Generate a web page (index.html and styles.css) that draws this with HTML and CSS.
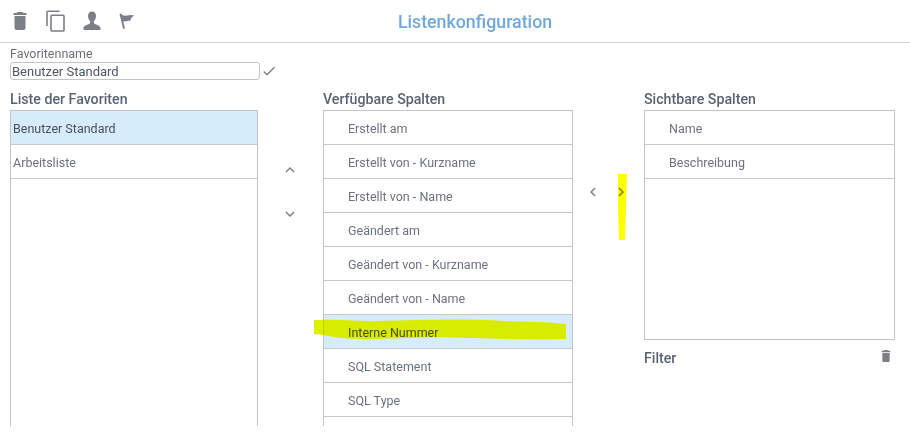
FILE: index.html

```html
<!DOCTYPE html>
<html lang="en">
<head>
  <meta charset="UTF-8">
  <title>Listenkonfiguration</title>
  <link rel="stylesheet" href="styles.css">
</head>
<body>
  <div class="page">
    <header class="topbar">
      <div class="tools">
        <svg class="tool" viewBox="0 0 24 24"><path d="M6.500 19c0 1.100.9 2 2 2h7c1.100 0 2-.9 2-2V7h-11v12zM18.500 4h-3l-1-1h-5l-1 1h-3v2h13V4z"/></svg>
        <svg class="tool" viewBox="0 0 24 24"><path d="M15.500 1.500H4c-1 0-1.800.8-1.800 1.800V17h1.600V3.100h11.700V1.500zm3.500 4H8c-1 0-1.800.8-1.800 1.800V21c0 1 .8 1.800 1.800 1.800h11c1 0 1.800-.8 1.800-1.800V7.300c0-1-.8-1.800-1.800-1.800zm.2 15.700H7.800V7.100h11.400v14.100z"/></svg>
        <svg class="tool" viewBox="0 0 24 24"><path d="M12 2.500c-2.600 0-4 2-4 4.500 0 2.200.9 4 2.100 5.100.5 1.500-.1 2.600-1.500 3.200-2.300 1-5.100 1.700-5.100 4V21h17v-1.700c0-2.300-2.800-3-5.100-4-1.400-.6-2-1.700-1.500-3.200 1.200-1.100 2.100-2.900 2.100-5.100 0-2.500-1.400-4.500-4-4.500z"/></svg>
        <svg class="tool" viewBox="0 0 24 24"><path d="M3.500 5l1.800-.5 1 1.500c2.700 1.400 5 .2 8 0l3.700.3c-1.200 1.400-2.800 2.700-3.600 4.300.2.500.3.900.4 1.300-2.700-.4-5 1.100-7.600.4l1.800 7.200-1.800.5L3.500 5z"/></svg>
      </div>
      <h1 class="title">Listenkonfiguration</h1>
    </header>

    <div class="name-block">
      <label class="name-label" for="favname">Favoritenname</label>
      <div class="name-row">
        <input class="name-input" id="favname" type="text" value="Benutzer Standard">
        <svg class="check" viewBox="0 0 24 24"><path d="M9 16.200L4.800 12l-1.400 1.400L9 19 21 7l-1.400-1.400z"/></svg>
      </div>
    </div>

    <div class="columns">
      <section class="col col-fav">
        <h2 class="col-title">Liste der Favoriten</h2>
        <ul class="list list-fill">
          <li class="plain selected">Benutzer Standard</li>
          <li class="plain">Arbeitsliste</li>
        </ul>
      </section>

      <div class="arrows arrows-updown">
        <svg class="arrow" viewBox="0 0 24 24"><path d="M7.400 15.400L12 10.800l4.600 4.600L18 14l-6-6-6 6z"/></svg>
        <svg class="arrow" viewBox="0 0 24 24"><path d="M7.400 8.600L12 13.200l4.600-4.600L18 10l-6 6-6-6z"/></svg>
      </div>

      <section class="col col-avail">
        <h2 class="col-title">Verfügbare Spalten</h2>
        <ul class="list list-fill">
          <li>Erstellt am</li>
          <li>Erstellt von - Kurzname</li>
          <li>Erstellt von - Name</li>
          <li>Geändert am</li>
          <li>Geändert von - Kurzname</li>
          <li>Geändert von - Name</li>
          <li class="selected">Interne Nummer</li>
          <li>SQL Statement</li>
          <li>SQL Type</li>
          <li></li>
        </ul>
      </section>

      <div class="arrows arrows-leftright">
        <svg class="arrow" viewBox="0 0 24 24"><path d="M15.400 7.400L10.800 12l4.600 4.600L14 18l-6-6 6-6z"/></svg>
        <svg class="arrow" viewBox="0 0 24 24"><path d="M8.600 7.400L13.200 12l-4.600 4.600L10 18l6-6-6-6z"/></svg>
      </div>

      <section class="col col-visible">
        <h2 class="col-title">Sichtbare Spalten</h2>
        <ul class="list list-visible">
          <li>Name</li>
          <li>Beschreibung</li>
        </ul>
        <div class="filter-row">
          <span class="filter-label">Filter</span>
          <svg class="filter-trash" viewBox="0 0 24 24"><path d="M6.500 19c0 1.100.9 2 2 2h7c1.100 0 2-.9 2-2V7h-11v12zM18.500 4h-3l-1-1h-5l-1 1h-3v2h13V4z"/></svg>
        </div>
      </section>
    </div>

    <!-- marker strokes drawn on top of the screenshot -->
    <svg class="marker marker-row" viewBox="0 0 254 22"><path d="M1 1c30-1 40 1 60 1 50-1 90-3 130 0 20 1 40 0 62 3l0 15c-20 1-40 0-60 0-30-1-70-3-100-1-30 1-45 2-65 0-10-1-20-4-27-4z"/></svg>
    <svg class="marker marker-arrow" viewBox="0 0 10 66"><path d="M1 0l9 0-1 30-1 36-6 0-1-30z"/></svg>
  </div>
</body>
</html>
```

FILE: styles.css

```css
* {
  box-sizing: border-box;
}
body {
  margin: 0;
  background: #fff;
  font-family: Roboto, "Liberation Sans", sans-serif;
  color: #6b7280;
}
.page {
  position: relative;
  height: 426px;
  overflow: hidden;
}
.topbar {
  position: relative;
  display: flex;
  align-items: center;
  height: 43px;
  border-bottom: 1px solid #d4d4d4;
}
.tools {
  display: flex;
  gap: 12px;
  padding-left: 8px;
}
.tool {
  width: 24px;
  height: 24px;
  fill: #7b8088;
}
.title {
  position: absolute;
  left: 0;
  right: 0;
  top: 11px;
  margin: 0;
  text-align: center;
  font-size: 17.8px;
  line-height: 22px;
  font-weight: 500;
  color: #6fa8dc;
  padding-left: 40px;
}
.name-block {
  padding: 3px 0 0 10px;
}
.name-label {
  display: block;
  font-size: 12.500px;
  line-height: 16px;
  color: #6b7078;
}
.name-row {
  display: flex;
  align-items: center;
  gap: 1px;
  height: 18px;
}
.name-input {
  width: 250px;
  height: 18px;
  padding: 0 1px;
  border: 1px solid #c4c4c4;
  border-radius: 3px;
  font-family: inherit;
  font-size: 13px;
  color: #4e5560;
  outline: none;
}
.check {
  width: 16px;
  height: 16px;
  fill: #7b8088;
}
.columns {
  display: flex;
  align-items: stretch;
  height: 346px;
  padding: 10px 0 0 10px;
}
.col {
  display: flex;
  flex-direction: column;
  flex: none;
}
.col-fav {
  width: 248px;
}
.col-avail {
  width: 250px;
}
.col-visible {
  width: 251px;
}
.col-title {
  flex: none;
  margin: 0;
  height: 20px;
  font-size: 14.2px;
  line-height: 18px;
  font-weight: 500;
  color: #5b6370;
}
.list {
  flex: none;
  margin: 0;
  padding: 0;
  list-style: none;
  border: 1px solid #c4c4c4;
  border-bottom: 0;
}
.list-fill {
  height: 330px;
}
.list-visible {
  height: 230px;
  border-bottom: 1px solid #c4c4c4;
}
.list li {
  height: 34px;
  padding-left: 24px;
  border-bottom: 1px solid #c8c8c8;
  font-size: 12.5px;
  line-height: 35px;
  color: #6b7280;
}
.list li.plain {
  padding-left: 2px;
}
.list li.selected {
  background: #d7ecfb;
  color: #4a505a;
}
.arrows {
  flex: none;
  display: flex;
}
.arrows-updown {
  width: 63px;
  margin-right: 2px;
  flex-direction: column;
  align-items: center;
  gap: 26px;
  padding-top: 71px;
}
.arrows-leftright {
  width: 67px;
  margin-right: 4px;
  justify-content: center;
  gap: 10px;
  padding-top: 93px;
  align-items: flex-start;
}
.arrow {
  width: 18px;
  height: 18px;
  fill: #7b8088;
}
.filter-row {
  display: flex;
  justify-content: space-between;
  align-items: flex-start;
  margin-top: 10px;
}
.filter-label {
  font-size: 14.2px;
  line-height: 17px;
  font-weight: 500;
  color: #5b6370;
}
.filter-trash {
  width: 16px;
  height: 16px;
  margin: -2px 1px 0 0;
  fill: #7b8088;
}
.marker {
  position: absolute;
  mix-blend-mode: darken;
}
.marker path {
  fill: #dcf000;
}
.marker-row {
  left: 313px;
  top: 319px;
  width: 254px;
  height: 22px;
}
.marker-arrow {
  left: 617px;
  top: 174px;
  width: 10px;
  height: 66px;
}
.marker-arrow path {
  fill: #ffff00;
}
```
